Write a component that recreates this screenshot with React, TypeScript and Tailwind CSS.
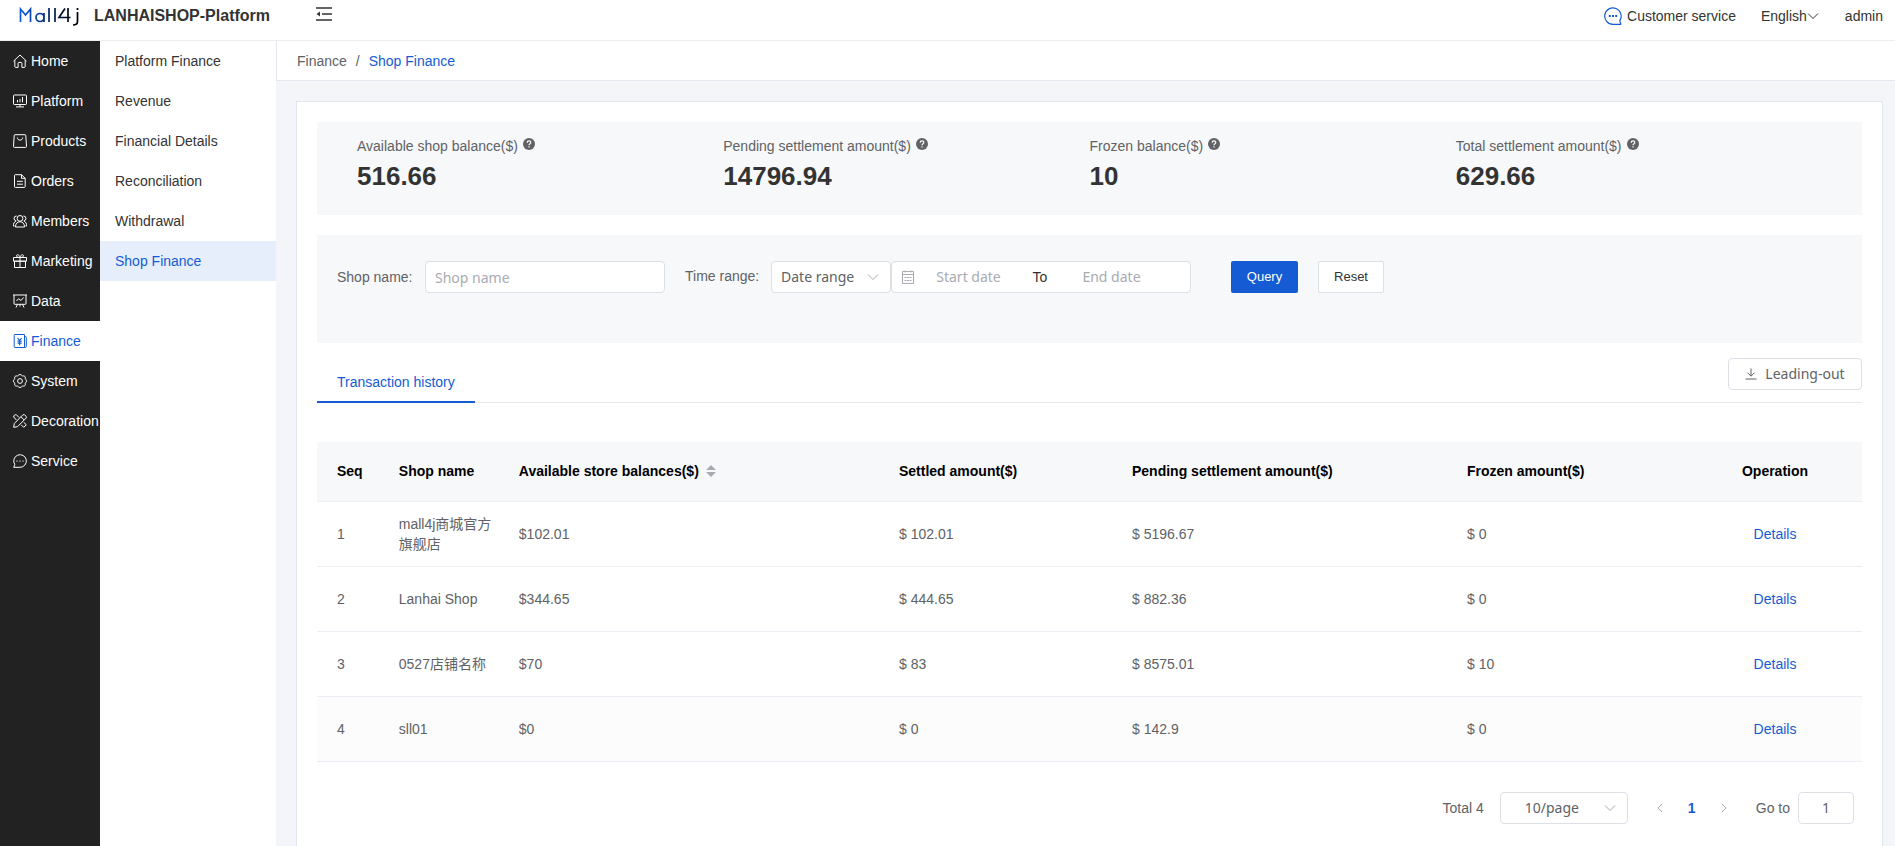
import { useState } from "react";
import type { ReactNode } from "react";

const sans = "font-['Liberation_Sans','Noto_Sans_CJK_SC',sans-serif]";
const inputFont = "font-['Noto_Sans','Noto_Sans_CJK_SC',sans-serif]";

const menuIcons: Record<string, ReactNode> = {
  Home: <path d="M.5 7.200 7 1l6.500 6.200M1.800 6.200v6.300c0 .6.3.9.9.9h2.400V9.200c0-.5.300-.8.800-.8h2.200c.5 0 .8.300.8.800v4.200h2.400c.6 0 .9-.3.9-.9V6.200" />,
  Platform: <path d="M1.300 1h11.400c.5 0 .8.300.8.800v7.900c0 .5-.3.800-.8.800H1.300c-.5 0-.8-.3-.8-.8V1.800c0-.5.300-.8.800-.8ZM4.500 6v2.300M7 5v3.300M9.500 3v5.300M7 10.500v2M3 12.900h8" />,
  Products: <path d="M2 .700h10c.5 0 .8.300.8.800l.7 10.900c0 .6-.3 1-.9 1H1.400c-.6 0-.9-.4-.9-1L1.200 1.500c0-.5.300-.8.800-.8ZM4.300 3.500c0 3.500 5.400 3.500 5.400 0" />,
  Orders: <path d="M2.300.700h6.200l3.700 3.600v8.300c0 .5-.3.800-.8.800H2.300c-.5 0-.8-.3-.8-.8V1.500c0-.5.300-.8.800-.8ZM8.500.700v3.600h3.700M4 7.300h5.800M4 10.200h5.800" />,
  Members: <path d="M7 1.500a2.900 2.900 0 1 1 0 5.800 2.900 2.900 0 0 1 0-5.800ZM2.500 13c0-3.300 1.800-5.300 4.500-5.300s4.500 2 4.500 5.300ZM3.300 6.800A2.400 2.400 0 0 1 3.600 2M10.700 6.800a2.400 2.400 0 0 0-.3-4.800M2.800 7.300C1.100 8 .400 9.500.400 12h1.200M11.200 7.300c1.700.7 2.400 2.200 2.400 4.700h-1.200" />,
  Marketing: <path d="M.500 3.500h13v3.700H.500ZM1.500 7.200h11v6.300h-11ZM7 3.500v10M7 3.500C5.300 3.500 3.500 3 3.500 1.800 3.500.300 6.300 0 7 3.500ZM7 3.500c1.700 0 3.500-.5 3.500-1.700C10.500.300 7.700 0 7 3.500Z" />,
  Data: <path d="M0 1h14M1 1v8.700c0 .4.300.6.700.6h10.600c.4 0 .7-.2.700-.6V1M3.500 7l2-2.300L8 6.500l2.500-3M4.500 10.300 3 13.500M9.500 10.300l1.500 3.200M7 10.300v2.200" />,
  Finance: (
    <>
      <path d="M2 .500h9.500v13H2c-.5 0-.8-.3-.8-.8V1.300c0-.5.300-.8.800-.8ZM11.500 2.500h1c.5 0 .8.300.8.800v9.400c0 .5-.3.800-.8.800h-1" />
      <path d="M4.600 4l2 2.500L8.600 4M4.500 7.200h4.200M4.500 9.200h4.200M6.600 6.500v4.800" strokeWidth="1.200" />
    </>
  ),
  System: (
    <path d="M5.300 1.300C6 .300 8 .300 8.700 1.300c.3.600 1 .8 1.600.6 1.200-.3 2.300 1 2 2.100-.2.600 0 1.100.5 1.500 1 .700 1 2.300 0 3-.5.400-.7.900-.5 1.500.3 1.100-.8 2.400-2 2.100-.6-.2-1.300 0-1.600.6-.7 1-2.700 1-3.400 0-.3-.6-1-.8-1.600-.6-1.200.3-2.300-1-2-2.100.2-.6 0-1.100-.5-1.500-1-.700-1-2.300 0-3 .5-.4.700-.9.500-1.500-.3-1.100.8-2.400 2-2.100.6.200 1.300 0 1.600-.6ZM7 4.600a2.400 2.400 0 1 1 0 4.800 2.400 2.400 0 0 1 0-4.800Z" />
  ),
  Decoration: <path d="M10 .700c2-.4 3.600 1.500 3.300 3.200L4.500 12.700.700 13.300 1.300 9.500ZM8 2.800 11.200 6M.700 3c-.2-1.500 1.200-2.600 2.600-2.300l2.800 2.900M.700 3l2.800 3.100M8.200 10.800l2.500 2.500 2.600-2.500-2.600-2.500" />,
  Service: <path d="M.700 13.300H7A6.300 6.300 0 1 0 1.800 10.500ZM4 6.500v1.200M7 6.500v1.200M10 6.500v1.200" />,
};

const menus = Object.keys(menuIcons);

const subMenus = ["Platform Finance", "Revenue", "Financial Details", "Reconciliation", "Withdrawal", "Shop Finance"];

const stats = [
  { label: "Available shop balance($)", value: "516.66" },
  { label: "Pending settlement amount($)", value: "14796.94" },
  { label: "Frozen balance($)", value: "10" },
  { label: "Total settlement amount($)", value: "629.66" },
];

const rows = [
  { shop: "mall4j商城官方旗舰店", available: "102.01", settled: "102.01", pending: "5196.67", frozen: "0" },
  { shop: "Lanhai Shop", available: "344.65", settled: "444.65", pending: "882.36", frozen: "0" },
  { shop: "0527店铺名称", available: "70", settled: "83", pending: "8575.01", frozen: "10" },
  { shop: "sll01", available: "0", settled: "0", pending: "142.9", frozen: "0" },
];

const Chevron = ({ className = "" }: { className?: string }) => (
  <svg viewBox="0 0 12 12" className={`h-3 w-3 ${className}`} fill="none" stroke="currentColor" aria-hidden="true">
    <path d="M1 3.500 6 8.500l5-5" />
  </svg>
);

const Logo = () => (
  <svg viewBox="0 0 60 20" className="h-5 w-[60px]" fill="none" strokeWidth="1.700" role="img" aria-label="Mall4j">
    <defs>
      <linearGradient id="logo" x1="0" x2="60" y1="0" y2="0" gradientUnits="userSpaceOnUse">
        <stop offset="0" stopColor="#0a5af0" />
        <stop offset="0.700" stopColor="#04122e" />
        <stop offset="1" stopColor="#000" />
      </linearGradient>
    </defs>
    <g stroke="url(#logo)">
      <path d="M1.500 16V3l5 6 5-6v13" />
      <path d="M25 11.500a4 4 0 1 0-8 0 4 4 0 0 0 8 0ZM25 7v9" />
      <path d="M30 2v14M36 2v14" />
      <path d="M46 2.500 40 11.500h11.500M49 2v14" />
      <path d="M58.500 6v9.500c0 2.500-1.500 3.500-4.500 3.500M58.500 2v2" />
    </g>
  </svg>
);

const Header = () => (
  <header className="flex h-[41px] items-start border-b border-[#ebedf0] bg-white text-sm text-[#333]">
    <div className="flex h-8 flex-1 items-center">
      <div className="ml-[19px] flex items-center gap-[15px]">
        <Logo />
        <h1 className="text-base font-bold">LANHAISHOP-Platform</h1>
      </div>
      <button type="button" aria-label="Collapse menu" className="ml-[46px] pb-1">
        <svg viewBox="0 0 16 14" className="h-[14px] w-4" fill="none" stroke="#333" strokeWidth="1.500">
          <path d="M0 1h16M6 7h10M0 13h16" />
          <path d="M4 4.500v5L.500 7Z" fill="#333" stroke="none" />
        </svg>
      </button>
    </div>
    <nav className="mr-3 flex h-8 items-center">
      <a href="#service" className="flex items-center gap-[5px]">
        <svg viewBox="0 0 18 18" className="h-[18px] w-[18px]" fill="none" stroke="#155bd4" strokeWidth="1.200">
          <path d="M16.800 17.300H9A8.200 8.200 0 1 1 15.800 13.600Z" strokeLinejoin="round" />
          <path d="M4.800 9h2M8 9h2M11.200 9h2" strokeWidth="1.800" />
        </svg>
        Customer service
      </a>
      <button type="button" className="ml-[25px] flex items-center">
        English
        <Chevron className="text-[#333]" />
      </button>
      <a href="#admin" className="ml-[26px]">
        admin
      </a>
    </nav>
  </header>
);

const Sidebar = () => (
  <nav className="w-[100px] shrink-0 bg-[#222] text-sm text-white">
    {menus.map((name) => (
      <a
        key={name}
        href={`#${name.toLowerCase()}`}
        className={`flex h-10 items-center gap-1 pl-[13px] ${name === "Finance" ? "bg-white text-[#155bd4]" : ""}`}
      >
        <svg viewBox="0 0 14 14" className="h-[14px] w-[14px] shrink-0" fill="none" stroke="currentColor" strokeLinejoin="round" aria-hidden="true">
          {menuIcons[name]}
        </svg>
        {name}
      </a>
    ))}
  </nav>
);

const SubMenu = () => (
  <nav className="w-44 shrink-0 bg-white text-sm text-[#333]">
    {subMenus.map((name) => (
      <a
        key={name}
        href={`#${name.toLowerCase().replace(" ", "-")}`}
        className={`flex h-10 items-center pl-[15px] ${name === "Shop Finance" ? "bg-[#e6eefb] text-[#155bd4]" : ""}`}
      >
        {name}
      </a>
    ))}
  </nav>
);

const HelpIcon = () => (
  <svg viewBox="0 0 12 12" className="h-3 w-3" aria-hidden="true">
    <circle cx="6" cy="6" r="6" fill="#606266" />
    <path d="M4.200 4.700C4.200 2.300 7.800 2.300 7.800 4.600 7.800 5.800 6 5.800 6 7.200M6 8.300v1.200" fill="none" stroke="#fff" strokeWidth="1.200" />
  </svg>
);

const Filters = () => {
  const [shopName, setShopName] = useState("");
  const field = `h-8 rounded border border-[#dcdfe6] bg-white placeholder-[#a8abb2] text-sm ${inputFont}`;

  return (
    <form className="mt-5 flex h-[108px] items-start bg-[#f7f8fa] pt-[26px] pl-5 text-sm text-[#606266]" onSubmit={(e) => e.preventDefault()}>
      <label htmlFor="shopName" className="w-[88px] leading-8">
        Shop name:
      </label>
      <input
        id="shopName"
        value={shopName}
        onChange={(e) => setShopName(e.target.value)}
        placeholder="Shop name"
        className={`w-60 px-[9px] ${field}`}
      />
      <label htmlFor="rangeType" className="ml-5 w-[86px] leading-[30px]">
        Time range:
      </label>
      <div className="relative">
        <select id="rangeType" className={`w-[120px] appearance-none pl-[9px] ${field}`}>
          <option>Date range</option>
        </select>
        <Chevron className="pointer-events-none absolute top-[10px] right-3 text-[#a8abb2]" />
      </div>
      <div className={`flex w-[300px] items-center pl-[9px] placeholder-[#a8abb2] ${field}`}>
        <svg viewBox="0 0 14 14" className="h-[14px] w-[14px] shrink-0" fill="none" stroke="#a8abb2" aria-hidden="true">
          <path d="M1.500 1.500h11v12h-11ZM1.500 4.500h11M4 .500v2M10 .500v2M3.500 7.500h2M6 7.500h2M8.500 7.500h2M3.500 10.500h2M6 10.500h2M8.500 10.500h2" />
        </svg>
        <input aria-label="Start date" placeholder="Start date" className="w-[107px] text-center placeholder-[#a8abb2]" />
        <span className={`w-9 text-center text-[#303133] ${sans}`}>To</span>
        <input aria-label="End date" placeholder="End date" className="w-[107px] text-center placeholder-[#a8abb2]" />
      </div>
      <button type="submit" className="ml-10 h-8 w-[67px] rounded-xs bg-[#155bd4] text-[13px] text-white">
        Query
      </button>
      <button type="reset" className="ml-5 h-8 w-[66px] rounded-xs border border-[#dcdfe6] bg-white text-[13px] text-[#333]" onClick={() => setShopName("")}>
        Reset
      </button>
    </form>
  );
};

const ShopTable = () => (
  <table className="mt-[39px] w-full table-fixed text-left text-sm text-[#606266]">
    <colgroup>
      <col className="w-[4%]" />
      <col className="w-[120px]" />
      <col />
      <col className="w-[233px]" />
      <col className="w-[335px]" />
      <col className="w-[241px]" />
      <col className="w-[174px]" />
    </colgroup>
    <thead className="bg-[#f7f8fa] text-black">
      <tr className="h-[59px] border-b border-[#ebeef5]">
        <th className="pl-5">Seq</th>
        <th className="pl-5">Shop name</th>
        <th className="pl-5">
          <button type="button" className="flex items-center gap-[7px] font-bold">
            Available store balances($)
            <svg viewBox="0 0 10 12" className="h-3 w-[10px]" fill="#a8abb2" aria-hidden="true">
              <path d="M5 0l5 5H0ZM5 12 0 7h10Z" />
            </svg>
          </button>
        </th>
        <th className="pl-5">Settled amount($)</th>
        <th className="pl-5">Pending settlement amount($)</th>
        <th className="pl-5">Frozen amount($)</th>
        <th className="text-center">Operation</th>
      </tr>
    </thead>
    <tbody>
      {rows.map((row, index) => (
        <tr key={row.shop} className="h-[65px] border-b border-[#ebeef5] last:bg-[#fcfcfc]">
          <td className="pl-5">{index + 1}</td>
          <td className="pl-5">{row.shop}</td>
          <td className="pl-5">${row.available}</td>
          <td className="pl-5">$ {row.settled}</td>
          <td className="pl-5">$ {row.pending}</td>
          <td className="pl-5">$ {row.frozen}</td>
          <td className="text-center text-[#155bd4]">
            <button type="button">Details</button>
          </td>
        </tr>
      ))}
    </tbody>
  </table>
);

const Pagination = () => {
  const [page, setPage] = useState("1");

  return (
    <div className="flex items-center justify-end pt-[30px] pr-2 pb-10 text-sm text-[#606266]">
      <span>Total 4</span>
      <div className="relative ml-4">
        <select aria-label="Page size" className={`h-8 w-32 appearance-none rounded border border-[#dcdfe6] bg-white pl-6 ${inputFont}`}>
          <option>10/page</option>
        </select>
        <Chevron className="pointer-events-none absolute top-[10px] right-3 text-[#a8abb2]" />
      </div>
      <button type="button" aria-label="Previous page" className="ml-4 flex h-8 w-8 items-center justify-center text-[#909399]">
        <Chevron className="h-[10px] w-[10px] rotate-90" />
      </button>
      <button type="button" className="h-8 w-8 font-bold text-[#155bd4]">
        1
      </button>
      <button type="button" aria-label="Next page" className="flex h-8 w-8 items-center justify-center text-[#909399]">
        <Chevron className="h-[10px] w-[10px] -rotate-90" />
      </button>
      <label htmlFor="goto" className="ml-4">
        Go to
      </label>
      <input
        id="goto"
        value={page}
        onChange={(e) => setPage(e.target.value)}
        className={`ml-2 h-8 w-14 rounded border border-[#dcdfe6] text-center ${inputFont}`}
      />
    </div>
  );
};

export default function App() {
  return (
    <div className={`flex min-h-screen flex-col bg-[#f4f5f9] ${sans}`}>
      <Header />
      <div className="flex flex-1">
        <Sidebar />
        <SubMenu />
        <div className="flex min-w-0 flex-1 flex-col">
          <div className="flex h-10 items-center gap-[9px] border-b border-l border-[#e3e5ef] bg-white pl-5 text-sm text-[#606266]">
            <a href="#finance">Finance</a>
            <span>/</span>
            <a href="#shop-finance" className="text-[#155bd4]">
              Shop Finance
            </a>
          </div>
          <main className="mt-5 mr-3 ml-5 flex-1 border border-b-0 border-[#e3e5ef] bg-white p-5 pb-0">
            <section className="grid h-[93px] grid-cols-4 content-start bg-[#f7f8fa] px-10 pt-[14px]">
              {stats.map((stat) => (
                <div key={stat.label}>
                  <div className="flex items-center gap-[5px] text-sm leading-5 text-[#606266]">
                    {stat.label}
                    <span className="pb-1">
                      <HelpIcon />
                    </span>
                  </div>
                  <div className="text-[26px] leading-10 font-bold text-[#333]">{stat.value}</div>
                </div>
              ))}
            </section>
            <Filters />
            <div className="mt-[15px] flex items-start justify-between border-b border-[#e4e7ed]">
              <button type="button" className="-mb-px h-[45px] border-b-2 border-[#155bd4] px-5 pt-1 text-sm text-[#155bd4]">
                Transaction history
              </button>
              <button type="button" className={`flex h-8 w-[134px] items-center justify-center gap-2 rounded border border-[#dcdfe6] text-sm text-[#606266] ${inputFont}`}>
                <svg viewBox="0 0 12 12" className="h-3 w-3" fill="none" stroke="currentColor" aria-hidden="true">
                  <path d="M6 .500v7.500M2.500 4.700 6 8.200l3.500-3.500M.500 11h11" />
                </svg>
                Leading-out
              </button>
            </div>
            <ShopTable />
            <Pagination />
          </main>
        </div>
      </div>
    </div>
  );
}
